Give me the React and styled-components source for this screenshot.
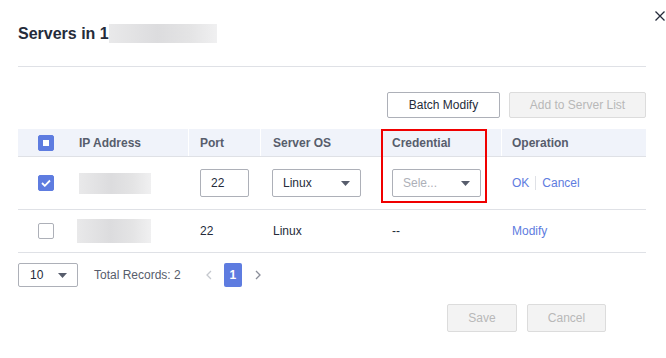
import React from "react";
import styled, { createGlobalStyle } from "styled-components";

const Global = createGlobalStyle`
  html, body { margin: 0; padding: 0; background: #fff; }
  body { font-family: "Liberation Sans", Arial, sans-serif; font-size: 12px; color: #252b3a; }
  * { box-sizing: border-box; }
`;

const Dialog = styled.div`
  position: relative;
  width: 666px;
  height: 358px;
  padding: 0 20px 0 18px;
  background: #fff;
`;

const CloseBtn = styled.button`
  position: absolute;
  top: 11px;
  right: 1px;
  width: 10px;
  height: 10px;
  padding: 0;
  border: 0;
  background: transparent;
  display: flex;
`;

const Header = styled.div`
  height: 67px;
  padding-top: 22px;
  border-bottom: 1px solid #dfe1e6;
  display: flex;
  align-items: flex-start;
`;

const Title = styled.h2`
  margin: 0;
  font-size: 16px;
  line-height: 24px;
  font-weight: 700;
  color: #252b3a;
`;

const Masked = styled.span`
  display: inline-block;
  width: ${(p) => p.$w}px;
  height: ${(p) => p.$h}px;
  margin-top: ${(p) => p.$top || 0}px;
  background: linear-gradient(90deg, #e9e9ea 0%, #dcdcde 45%, #e4e4e5 75%, #f0f0f1 100%);
  filter: blur(0.6px);
`;

const Toolbar = styled.div`
  margin-top: 25px;
  display: flex;
  justify-content: flex-end;
  gap: 9px;
`;

const Button = styled.button`
  height: ${(p) => p.$h || 26}px;
  width: ${(p) => p.$w}px;
  padding: 0;
  border-radius: 2px;
  font-family: inherit;
  font-size: 12px;
  border: 1px solid ${(p) => (p.disabled ? "#dcdcdc" : "#adb0b8")};
  background: ${(p) => (p.disabled ? "#f3f3f3" : "#fff")};
  color: ${(p) => (p.disabled ? "#b8b8b8" : "#252b3a")};
`;

const Table = styled.div`
  position: relative;
  margin-top: 11px;
`;

const Row = styled.div`
  display: grid;
  grid-template-columns: 49px 122px 72px 120px 121px 144px;
  height: ${(p) => p.$h}px;
  border-bottom: 1px solid #dfe1e6;
  background: ${(p) => (p.$head ? "#f0f3fa" : "#fff")};
  color: ${(p) => (p.$head ? "#575d6c" : "#252b3a")};
  font-weight: ${(p) => (p.$head ? 700 : 400)};
`;

const Cell = styled.div`
  display: flex;
  align-items: center;
  gap: 6px;
  padding-left: ${(p) => p.$pl ?? 11}px;
  border-right: ${(p) => (p.$div ? "1px solid #fff" : "0")};
  white-space: nowrap;
`;

const Check = styled.span`
  width: 16px;
  height: 16px;
  border-radius: 2px;
  display: flex;
  align-items: center;
  justify-content: center;
  background: ${(p) => (p.$on ? "#5e7ce0" : "#fff")};
  border: 1px solid ${(p) => (p.$on ? "#5e7ce0" : "#adb0b8")};
`;

const Dot = styled.span`
  width: 6px;
  height: 6px;
  background: #fff;
`;

const Field = styled.div`
  height: ${(p) => p.$h || 28}px;
  width: ${(p) => p.$w}px;
  border: 1px solid #adb0b8;
  border-radius: 2px;
  display: flex;
  align-items: center;
  justify-content: space-between;
  padding: 0 10px 0 ${(p) => p.$pl || 10}px;
  color: ${(p) => (p.$ph ? "#adb0b8" : "#252b3a")};
  background: #fff;
`;

const Caret = () => (
  <svg width="9" height="5" viewBox="0 0 9 5">
    <path d="M0 0h9L4.5 5z" fill="#575d6c" />
  </svg>
);

const Link = styled.a`
  color: #5e7ce0;
  text-decoration: none;
`;

const Sep = styled.span`
  width: 1px;
  height: 14px;
  background: #dfe1e6;
`;

const Highlight = styled.div`
  position: absolute;
  top: 0;
  left: 363px;
  width: 106px;
  height: 74px;
  border: 2px solid #f00000;
  pointer-events: none;
`;

const Pager = styled.div`
  margin-top: 10px;
  height: 24px;
  display: flex;
  align-items: center;
`;

const Total = styled.span`
  margin-left: 16px;
  color: #575d6c;
`;

const Arrow = styled.span`
  display: flex;
  margin: ${(p) => p.$m};
`;

const Page = styled.span`
  width: 18px;
  height: 24px;
  border-radius: 2px;
  background: #5e7ce0;
  color: #fff;
  font-weight: 700;
  display: flex;
  align-items: center;
  justify-content: center;
`;

const Footer = styled.div`
  margin-top: 17px;
  padding-right: 40px;
  display: flex;
  justify-content: flex-end;
  gap: 10px;
`;

export default function App() {
  return (
    <Dialog>
      <Global />
      <CloseBtn aria-label="close">
        <svg width="10" height="10" viewBox="0 0 10 10">
          <path d="M0.5 0.5L9.5 9.5M9.5 0.5L0.5 9.5" stroke="#252b3a" strokeWidth="1.3" />
        </svg>
      </CloseBtn>
      <Header>
        <Title>Servers in 1</Title>
        <Masked $w={108} $h={19} $top={2} />
      </Header>
      <Toolbar>
        <Button $w={113}>Batch Modify</Button>
        <Button $w={137} disabled>
          Add to Server List
        </Button>
      </Toolbar>
      <Table>
        <Row $head $h={28}>
          <Cell $pl={20}>
            <Check $on>
              <Dot />
            </Check>
          </Cell>
          <Cell $pl={12} $div>IP Address</Cell>
          <Cell $div>Port</Cell>
          <Cell $pl={12}>Server OS</Cell>
          <Cell $div>Credential</Cell>
          <Cell $pl={10}>Operation</Cell>
        </Row>
        <Row $h={53}>
          <Cell $pl={20}>
            <Check $on>
              <svg width="10" height="8" viewBox="0 0 10 8">
                <path d="M1 4l2.8 2.8L9 1.5" stroke="#fff" strokeWidth="1.8" fill="none" />
              </svg>
            </Check>
          </Cell>
          <Cell $pl={12}>
            <Masked $w={72} $h={21} />
          </Cell>
          <Cell>
            <Field $w={49}>22</Field>
          </Cell>
          <Cell>
            <Field $w={89}>
              Linux
              <Caret />
            </Field>
          </Cell>
          <Cell>
            <Field $w={89} $ph>
              Sele...
              <Caret />
            </Field>
          </Cell>
          <Cell $pl={10}>
            <Link href="#">OK</Link>
            <Sep />
            <Link href="#">Cancel</Link>
          </Cell>
        </Row>
        <Row $h={43}>
          <Cell $pl={20}>
            <Check />
          </Cell>
          <Cell $pl={10}>
            <Masked $w={74} $h={24} />
          </Cell>
          <Cell>22</Cell>
          <Cell $pl={12}>Linux</Cell>
          <Cell>--</Cell>
          <Cell $pl={10}>
            <Link href="#">Modify</Link>
          </Cell>
        </Row>
        <Highlight />
      </Table>
      <Pager>
        <Field $w={60} $h={24} $pl={11}>
          10
          <Caret />
        </Field>
        <Total>Total Records: 2</Total>
        <Arrow $m="0 12px 0 25px">
          <svg width="6" height="10" viewBox="0 0 6 10">
            <path d="M5 1L1 5l4 4" stroke="#c5c8ce" strokeWidth="1.3" fill="none" />
          </svg>
        </Arrow>
        <Page>1</Page>
        <Arrow $m="0 0 0 13px">
          <svg width="6" height="10" viewBox="0 0 6 10">
            <path d="M1 1l4 4-4 4" stroke="#8a8e99" strokeWidth="1.3" fill="none" />
          </svg>
        </Arrow>
      </Pager>
      <Footer>
        <Button $w={70} $h={28} disabled>
          Save
        </Button>
        <Button $w={79} $h={28} disabled>
          Cancel
        </Button>
      </Footer>
    </Dialog>
  );
}
